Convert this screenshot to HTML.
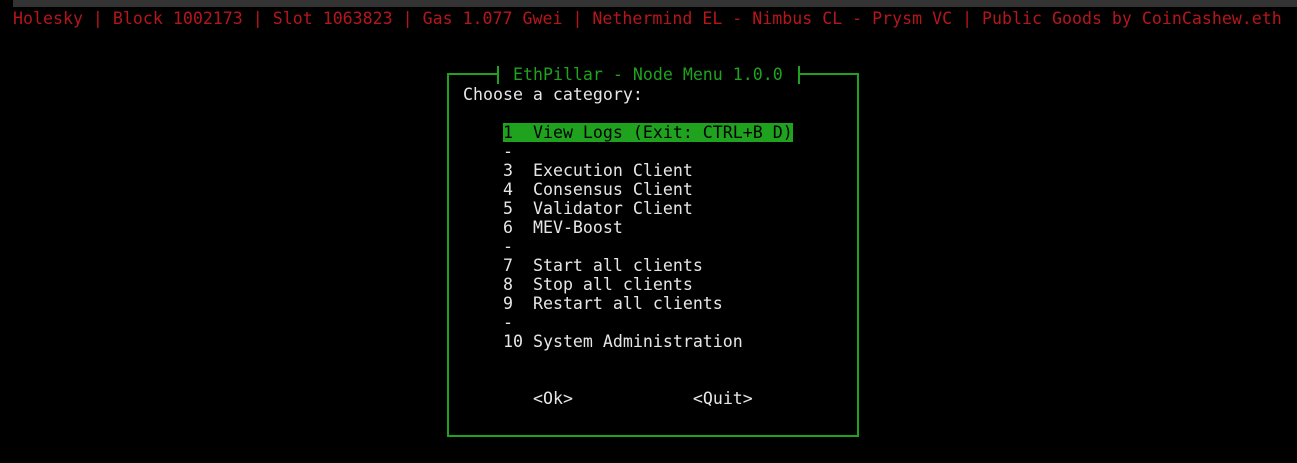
<!DOCTYPE html><html><head><style>
body{margin:0;width:1297px;height:463px;background:#000;overflow:hidden;position:relative;font-family:"DejaVu Sans Mono","Liberation Mono",monospace;font-size:16.6px}
.t{position:absolute;white-space:pre;line-height:19px;height:19px}
.bar{position:absolute;left:13px;top:0;width:1284px;height:7px;background:#333}
.box{position:absolute;left:447px;top:73px;width:408px;height:360px;border:2px solid #1fa31f}
.w{color:#e6e6e6}
.g{color:#1fa31f}
.v{position:absolute;width:2px;height:18px;top:66px;background:#1fa31f}
.bk{position:absolute;top:70px;left:499px;width:299px;height:8px;background:#000}
</style></head><body>
<div class="bar"></div>
<div class="t" style="left:13px;top:9px;color:#b5161b">Holesky | Block 1002173 | Slot 1063823 | Gas 1.077 Gwei | Nethermind EL - Nimbus CL - Prysm VC | Public Goods by CoinCashew.eth</div>
<div class="box"></div>
<div class="bk"></div>
<div class="t g" style="left:503px;top:65px"> EthPillar - Node Menu 1.0.0</div>
<div class="v" style="left:497px"></div>
<div class="v" style="left:798px"></div>
<div class="t w" style="left:463px;top:85px">Choose a category:</div>
<div class="t" style="left:503px;top:123px;background:#1fa31f;color:#000">1  View Logs (Exit: CTRL+B D)</div>
<div class="t w" style="left:503px;top:142px">-
3  Execution Client
4  Consensus Client
5  Validator Client
6  MEV-Boost
-
7  Start all clients
8  Stop all clients
9  Restart all clients
-
10 System Administration</div>
<div class="t w" style="left:533px;top:389px">&lt;Ok&gt;            &lt;Quit&gt;</div>
</body></html>
